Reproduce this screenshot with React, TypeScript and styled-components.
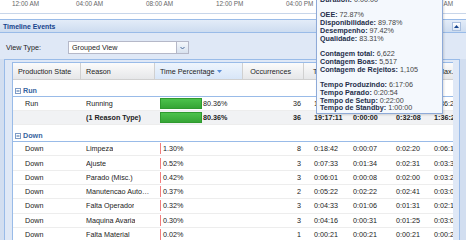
import React from 'react';
import styled, { createGlobalStyle } from 'styled-components';

const GlobalStyle = createGlobalStyle`
  html, body {
    margin: 0;
    padding: 0;
    background: #fff;
  }
  body {
    font-family: 'Liberation Sans', Arial, sans-serif;
    font-size: 7.2px;
    color: #222;
  }
`;

const COLS = '68px 74px 88px 61px 44px 43px 38px 42px';

const Page = styled.div`
  position: relative;
  width: 466px;
  height: 240px;
  overflow: hidden;
`;

const Timeline = styled.div`
  display: flex;
  height: 13px;
  padding-left: 12px;
  border-bottom: 1px solid #c8d6ea;
`;

const TimeLabel = styled.span`
  width: 70px;
  flex: none;
  font-size: 6.4px;
  line-height: 8px;
  color: #666;

  &:first-child {
    width: 64px;
  }
`;

const Panel = styled.div`
  margin-top: 5px;
  border-top: 1px solid #99bbe8;
`;

const PanelHeader = styled.div`
  display: flex;
  align-items: center;
  justify-content: space-between;
  height: 12px;
  padding: 0 5px 0 3px;
  background: linear-gradient(#e3ecf8, #cddcf0);
  border-bottom: 1px solid #99bbe8;
`;

const PanelTitle = styled.span`
  font-weight: bold;
  font-size: 6.9px;
  color: #15428b;
`;

const ToolButton = styled.span`
  width: 7px;
  height: 7px;
  border: 1px solid #a9bfdf;
  background: linear-gradient(#ffffff, #dbe6f4);
  display: flex;
  align-items: center;
  justify-content: center;
`;

const PanelBody = styled.div`
  background: #d2def0;
  height: 220px;
`;

const Toolbar = styled.div`
  display: flex;
  align-items: center;
  height: 13px;
  padding: 8px 0 5px 6px;
  background: #dfe8f6;
`;

const FieldLabel = styled.span`
  width: 62px;
  flex: none;
`;

const Combo = styled.div`
  display: flex;
  width: 119px;
  height: 11px;
  border: 1px solid #b5b8c8;
  background: #fff;
`;

const ComboText = styled.span`
  flex: 1;
  padding-left: 3px;
  line-height: 11px;
`;

const ComboTrigger = styled.span`
  width: 11px;
  border-left: 1px solid #b5b8c8;
  background: linear-gradient(#f4f7fb, #d8e2ef);
  display: flex;
  align-items: center;
  justify-content: center;
`;

const Inner = styled.div`
  margin: 0 6px 0 4px;
  padding: 2px 6px 0 7px;
  border: 1px solid #99bbe8;
  border-bottom: none;
  background: #dfe8f6;
  height: 200px;
`;

const Grid = styled.div`
  background: #fff;
  border: 1px solid #99bbe8;
  border-right: none;
  height: 200px;
  overflow: hidden;
`;

const HeaderRow = styled.div`
  display: grid;
  grid-template-columns: ${COLS};
  height: 16px;
  background: linear-gradient(#fbfbfb, #e6e7e9);
  border-bottom: 1px solid #d0d0d0;
`;

const HeaderCell = styled.div<{ $sorted?: boolean; $right?: boolean; $pad?: number }>`
  display: flex;
  align-items: center;
  justify-content: ${(p) => (p.$right ? 'flex-end' : 'flex-start')};
  gap: 3px;
  padding: 0 ${(p) => (p.$right ? '12px' : '4px')} 0 ${(p) => p.$pad ?? 5}px;
  border-right: 1px solid #d0d0d0;
  white-space: nowrap;
  background: ${(p) => (p.$sorted ? 'linear-gradient(#eef5fd, #d8e6f8)' : 'transparent')};
  color: #222;
`;

const GroupRow = styled.div`
  display: flex;
  align-items: center;
  gap: 2px;
  height: 10px;
  padding: 5.5px 0 0.25px 2px;
  border-bottom: 1px solid #99bbe8;
  font-weight: bold;
  color: #3764a0;
`;

const Row = styled.div<{ $summary?: boolean }>`
  display: grid;
  grid-template-columns: ${COLS};
  height: 13.3px;
  border-bottom: 1px solid #ededed;
  background: ${(p) => (p.$summary ? '#f1f2f4' : '#fff')};
  font-weight: ${(p) => (p.$summary ? 'bold' : 'normal')};
`;

const Cell = styled.div<{ $right?: boolean; $pad?: number }>`
  display: flex;
  align-items: center;
  justify-content: ${(p) => (p.$right ? 'flex-end' : 'flex-start')};
  padding: 0 ${(p) => (p.$right ? 3 : 5)}px 0 ${(p) => p.$pad ?? 5}px;
  white-space: nowrap;
  overflow: hidden;
  min-width: 0;
`;

const Ellipsis = styled.span`
  overflow: hidden;
  text-overflow: ellipsis;
`;

const Bar = styled.span<{ $color: 'green' | 'red' }>`
  flex: none;
  height: ${(p) => (p.$color === 'green' ? '9px' : '11px')};
  margin-right: ${(p) => (p.$color === 'green' ? '1px' : '2px')};
  background: ${(p) => (p.$color === 'green' ? 'linear-gradient(#4cc24c, #36a536)' : '#f27d7d')};
  border: ${(p) => (p.$color === 'green' ? '1px solid #2f9a2f' : 'none')};
`;

const Tooltip = styled.div`
  position: absolute;
  left: 316px;
  top: -7px;
  width: 118px;
  padding: 2px 4px 1px 3px;
  background: #f4f8fd;
  border: 1px solid #8eaad8;
  box-shadow: 1px 1px 2px rgba(0, 0, 0, 0.15);
  line-height: 7.74px;
  color: #444;
`;

const TipLine = styled.div`
  height: 7.74px;
  white-space: nowrap;
`;

const TipKey = styled.span`
  font-weight: bold;
  color: #1f2f4a;
`;

type DataRow = {
  state: string;
  reason: string;
  pct: number;
  occ: number;
  times: string[];
};

const runRows: DataRow[] = [
  { state: 'Run', reason: 'Running', pct: 80.36, occ: 36, times: ['19:17:11', '0:00:00', '0:32:08', '1:36:25'] },
];

const downRows: DataRow[] = [
  { state: 'Down', reason: 'Limpeza', pct: 1.3, occ: 8, times: ['0:18:42', '0:00:07', '0:02:20', '0:06:12'] },
  { state: 'Down', reason: 'Ajuste', pct: 0.52, occ: 3, times: ['0:07:33', '0:01:34', '0:02:31', '0:03:38'] },
  { state: 'Down', reason: 'Parado (Misc.)', pct: 0.42, occ: 3, times: ['0:06:01', '0:00:08', '0:02:00', '0:03:24'] },
  { state: 'Down', reason: 'Manutencao Autonoma', pct: 0.37, occ: 2, times: ['0:05:22', '0:02:22', '0:02:41', '0:03:00'] },
  { state: 'Down', reason: 'Falta Operador', pct: 0.32, occ: 3, times: ['0:04:33', '0:01:06', '0:01:31', '0:02:10'] },
  { state: 'Down', reason: 'Maquina Avaria', pct: 0.3, occ: 3, times: ['0:04:16', '0:00:31', '0:01:25', '0:03:04'] },
  { state: 'Down', reason: 'Falta Material', pct: 0.02, occ: 1, times: ['0:00:21', '0:00:21', '0:00:21', '0:00:21'] },
];

const tipLines: (string[] | null)[] = [
  ['Duration', '0:00:00'],
  null,
  ['OEE', '72.87%'],
  ['Disponibilidade', '89.78%'],
  ['Desempenho', '97.42%'],
  ['Qualidade', '83.31%'],
  null,
  ['Contagem total', '6,622'],
  ['Contagem Boas', '5,517'],
  ['Contagem de Rejeitos', '1,105'],
  null,
  ['Tempo Produzindo', '6:17:06'],
  ['Tempo Parado', '0:20:54'],
  ['Tempo de Setup', '0:22:00'],
  ['Tempo de Standby', '1:00:00'],
];

const CollapseIcon = () => (
  <svg width="6" height="6" viewBox="0 0 6 6">
    <rect x="0.5" y="0.5" width="5" height="5" fill="#fff" stroke="#7e9cc8" />
    <line x1="1.5" y1="3" x2="4.5" y2="3" stroke="#3764a0" />
  </svg>
);

const PctCell = ({ pct }: { pct: number }) => {
  const green = pct > 10;
  return (
    <Cell>
      <Bar $color={green ? 'green' : 'red'} style={{ width: green ? Math.round(pct * 0.5) : 1 }} />
      {pct.toFixed(2)}%
    </Cell>
  );
};

const GridRow = ({ row, summary }: { row: DataRow; summary?: boolean }) => (
  <Row $summary={summary}>
    <Cell $pad={12}>{summary ? '' : row.state}</Cell>
    <Cell>
      <Ellipsis>{row.reason}</Ellipsis>
    </Cell>
    <PctCell pct={row.pct} />
    <Cell $right>{row.occ}</Cell>
    {row.times.map((t, i) => (
      <Cell key={i} $pad={i === 0 ? 10 : 5}>
        {t}
      </Cell>
    ))}
  </Row>
);

const Group = ({ name, rows, summary }: { name: string; rows: DataRow[]; summary?: DataRow }) => (
  <>
    <GroupRow>
      <CollapseIcon />
      {name}
    </GroupRow>
    {rows.map((r) => (
      <GridRow key={r.reason} row={r} />
    ))}
    {summary && <GridRow row={summary} summary />}
  </>
);

const App = () => (
  <Page>
    <GlobalStyle />
    <Timeline>
      {['12:00 AM', '04:00 AM', '08:00 AM', '12:00 PM', '04:00 PM', '08:00 PM', '12:00 AM'].map((l, i) => (
        <TimeLabel key={i}>{l}</TimeLabel>
      ))}
    </Timeline>
    <Panel>
      <PanelHeader>
        <PanelTitle>Timeline Events</PanelTitle>
        <ToolButton>
          <svg width="5" height="3" viewBox="0 0 5 3">
            <path d="M0 3 L2.5 0 L5 3 Z" fill="#15428b" />
          </svg>
        </ToolButton>
      </PanelHeader>
      <PanelBody>
        <Toolbar>
          <FieldLabel>View Type:</FieldLabel>
          <Combo>
            <ComboText>Grouped View</ComboText>
            <ComboTrigger>
              <svg width="5" height="4" viewBox="0 0 5 4">
                <path d="M0.5 1 L2.5 3 L4.5 1" fill="none" stroke="#4a6a9a" strokeWidth="1" />
              </svg>
            </ComboTrigger>
          </Combo>
        </Toolbar>
        <Inner>
          <Grid>
            <HeaderRow>
              <HeaderCell>Production State</HeaderCell>
              <HeaderCell>Reason</HeaderCell>
              <HeaderCell $sorted>
                Time Percentage
                <svg width="5" height="3" viewBox="0 0 5 3">
                  <path d="M0 0 L5 0 L2.5 3 Z" fill="#5b8ed8" />
                </svg>
              </HeaderCell>
              <HeaderCell $right>Occurrences</HeaderCell>
              <HeaderCell $pad={9}>Total Time</HeaderCell>
              <HeaderCell>Min.</HeaderCell>
              <HeaderCell>Avg.</HeaderCell>
              <HeaderCell $pad={9}>Max.</HeaderCell>
            </HeaderRow>
            <Group
              name="Run"
              rows={runRows}
              summary={{ ...runRows[0], state: '', reason: '(1 Reason Type)' }}
            />
            <Group name="Down" rows={downRows} />
          </Grid>
        </Inner>
      </PanelBody>
    </Panel>
    <Tooltip>
      {tipLines.map((l, i) => (
        <TipLine key={i}>
          {l && (
            <>
              <TipKey>{l[0]}:</TipKey> {l[1]}
            </>
          )}
        </TipLine>
      ))}
    </Tooltip>
  </Page>
);

export default App;
